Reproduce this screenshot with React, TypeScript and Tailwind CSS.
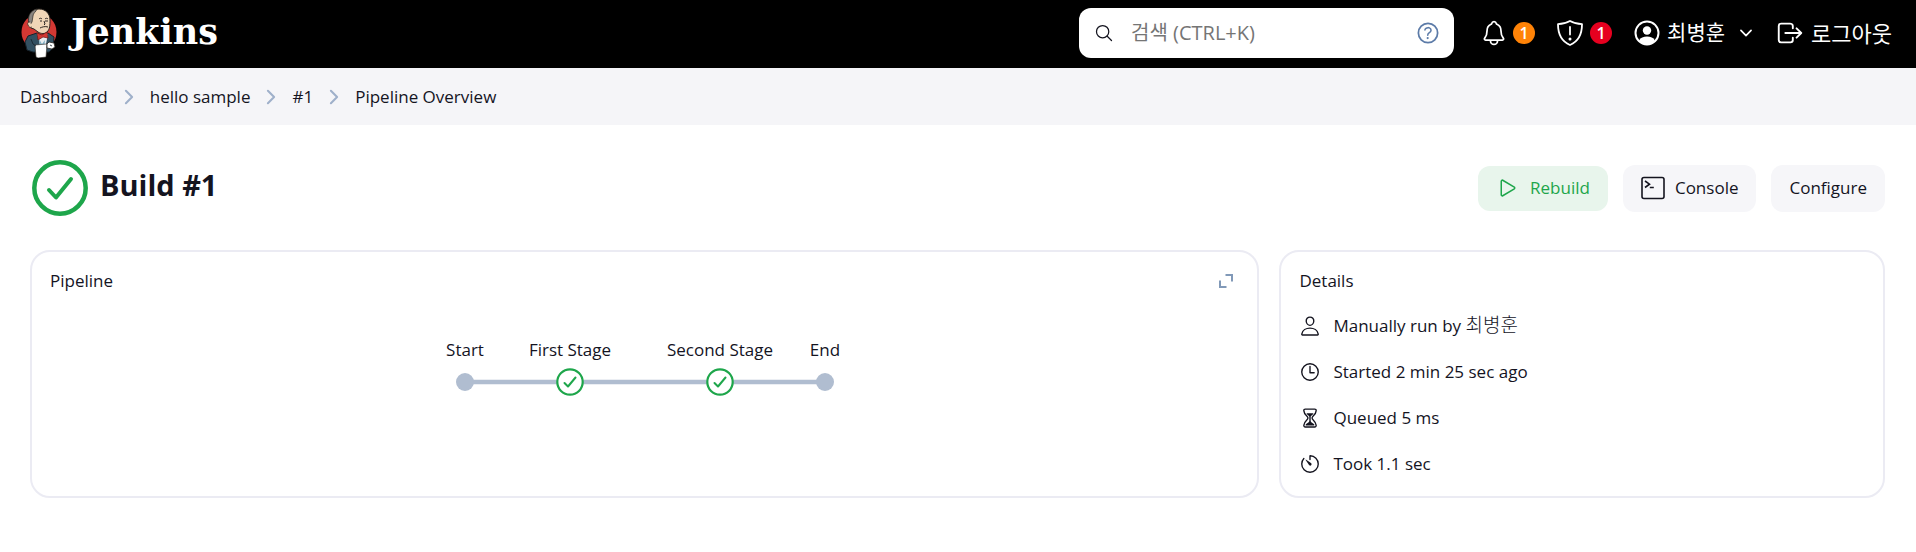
import type { ReactNode } from "react";
import {
  IoChevronDownOutline,
  IoChevronForwardOutline,
  IoHelpCircleOutline,
  IoHourglassOutline,
  IoLogOutOutline,
  IoNotificationsOutline,
  IoPersonOutline,
  IoPlayOutline,
  IoSearchOutline,
  IoTimeOutline,
  IoTimerOutline,
} from "react-icons/io5";

const crumbs = ["Dashboard", "hello sample", "#1", "Pipeline Overview"];

const nodes = [
  { x: 55, label: "Start", type: "edge" },
  { x: 160, label: "First Stage", type: "stage" },
  { x: 310, label: "Second Stage", type: "stage" },
  { x: 415, label: "End", type: "edge" },
];

function JenkinsLogo() {
  return (
    <svg viewBox="0 0 36 50" className="h-[50px] w-9 shrink-0" aria-hidden="true">
      <ellipse cx="18" cy="24" rx="17.5" ry="18" fill="#d33833" />
      <path d="M7 28l9-3 5 3 6-3 6 4-1 11-4 4H12l-6-2-2-8z" fill="#335061" stroke="#16222b" strokeWidth="1" />
      <path d="M16 25l5 4 3-4 3 1-3 15h-4z" fill="#e9edf0" />
      <path d="M18 31l3 5 3-4-1 9h-4z" fill="#81b0c4" />
      <path
        d="M8 14C7 6 12 1 18 1c7 0 11 5 11 11 0 5 0 9-3 12-2 2-6 2-9 0l-4-3-3-1c-2-1-2-3-2-6z"
        fill="#f0d6b7"
        stroke="#2b2622"
        strokeWidth="1"
      />
      <path d="M8 15C6 8 10 2 16 1c-1 3-4 4-4 7l-1 6-2 3z" fill="#8a8580" stroke="#2b2622" strokeWidth="0.7" />
      <path d="M9 14c-2 0-3 1-2 3s2 3 4 2" fill="#f0d6b7" stroke="#2b2622" strokeWidth="0.7" />
      <path
        d="M18 11c1-1 2-1 3 0M24 11c1-1 2-1 3 0M19 13h2M24 13h3M23 13l1 3-1 1M19 20c2-1 5-2 8-1"
        fill="none"
        stroke="#2b2622"
        strokeWidth="1"
      />
      <path d="M16 25l5 2 5-3 1 6-5-1-5 3z" fill="#d33833" stroke="#6b1512" strokeWidth="0.7" />
      <path d="M14 37l12-1-1 13-8 1-2-1z" fill="#fff" stroke="#2b2622" strokeWidth="0.6" />
      <path d="M26 36l2-2 5 1 1 4-3 2-5-1z" fill="#fff" stroke="#2b2622" strokeWidth="0.8" />
      <path d="M10 31l2 5 3 2M29 37l2 1" fill="none" stroke="#16222b" strokeWidth="0.8" />
    </svg>
  );
}

function ShieldIcon() {
  return (
    <svg viewBox="0 0 26 26" className="h-[26px] w-[26px]" fill="none" stroke="currentColor" strokeWidth="1.800">
      <path
        d="M13 1C9.600 3 5.500 4 1 4.200 1 14 3.800 21 13 25c9.200-4 12-11 12-20.800C20.500 4 16.400 3 13 1z"
        strokeLinejoin="round"
      />
      <path d="M13 7v7.500" strokeLinecap="round" />
      <circle cx="13" cy="19" r="1.500" fill="currentColor" stroke="none" />
    </svg>
  );
}

function UserCircleIcon() {
  return (
    <svg viewBox="0 0 26 26" className="h-[26px] w-[26px]">
      <circle cx="13" cy="13" r="11.500" fill="none" stroke="currentColor" strokeWidth="2" />
      <circle cx="13" cy="10.500" r="4.200" fill="currentColor" />
      <path d="M5 20.500c1.500-3 4.500-4 8-4s6.500 1 8 4A11 11 0 0 1 13 24.500a11 11 0 0 1-8-4z" fill="currentColor" />
    </svg>
  );
}

function ConsoleIcon() {
  return (
    <svg viewBox="0 0 24 24" className="h-6 w-6" fill="none" stroke="currentColor" strokeWidth="1.600">
      <rect x="1" y="1.500" width="22" height="21" rx="2" />
      <path d="M4 5l4.500 3.200L4 11.500M8.800 11.500h4" />
    </svg>
  );
}

function ExpandIcon() {
  return (
    <svg viewBox="0 0 14 14" className="h-[14px] w-[14px]" fill="none" stroke="currentColor" strokeWidth="2">
      <path d="M6.500 1H13v6.500M1 6.500V13h6.500" />
    </svg>
  );
}

function SuccessIcon() {
  return (
    <svg viewBox="0 0 56 56" className="h-14 w-14" fill="none" stroke="#1ea64b" strokeLinecap="round" strokeLinejoin="round">
      <circle cx="28" cy="28" r="25.700" strokeWidth="4.500" />
      <path d="M17 30l7 7.500L39 19" strokeWidth="4" />
    </svg>
  );
}

function Badge({ color, children }: { color: string; children: ReactNode }) {
  return (
    <span className={`flex h-[22px] w-[22px] items-center justify-center rounded-full text-base font-semibold ${color}`}>
      {children}
    </span>
  );
}

function Header() {
  return (
    <header className="flex h-[68px] items-center bg-black pr-6 pb-[2px] pl-[21px] text-white">
      <a href="#" className="flex items-center gap-[14px]">
        <JenkinsLogo />
        <span className="pb-[2px] font-['DejaVu_Serif',serif] text-[35px] leading-10 font-bold">Jenkins</span>
      </a>
      <label className="ml-auto flex h-[50px] w-[375px] items-center rounded-xl bg-white pr-3 pl-[15px]">
        <IoSearchOutline className="h-5 w-5 text-[#14141f]" />
        <input
          type="search"
          aria-label="검색"
          placeholder="검색 (CTRL+K)"
          className="ml-[17px] min-w-0 flex-1 bg-transparent text-xl text-[#14141f] outline-none placeholder:text-[#757575]"
        />
        <IoHelpCircleOutline className="h-7 w-7 text-[#5c7ba8]" />
      </label>
      <button type="button" aria-label="Notifications" className="ml-[26px] flex items-center gap-[5px]">
        <IoNotificationsOutline className="h-7 w-7" />
        <Badge color="bg-[#ff8307]">1</Badge>
      </button>
      <button type="button" aria-label="Security warnings" className="ml-[22px] flex items-center gap-[7px]">
        <ShieldIcon />
        <Badge color="bg-[#e6001f]">1</Badge>
      </button>
      <button type="button" className="ml-[22px] flex items-center gap-[7px] text-[21px]">
        <UserCircleIcon />
        최병훈
        <IoChevronDownOutline className="ml-[5px] h-[18px] w-[18px]" />
      </button>
      <a href="#" className="ml-5 flex items-center gap-[6px] text-[22px]">
        <IoLogOutOutline className="h-[30px] w-[30px]" />
        로그아웃
      </a>
    </header>
  );
}

function Breadcrumbs() {
  return (
    <nav className="flex h-[57px] items-center gap-[10px] bg-[#f5f5f8] px-5">
      {crumbs.map((crumb, index) => (
        <div key={crumb} className="flex items-center gap-[10px]">
          {index > 0 && <IoChevronForwardOutline className="h-[22px] w-[22px] text-[#9fb0ca]" />}
          <a href="#">{crumb}</a>
        </div>
      ))}
    </nav>
  );
}

function PipelineGraph() {
  return (
    <svg viewBox="0 0 470 70" className="mx-auto w-[470px]">
      <path d="M55 47H415" stroke="#b0bdd0" strokeWidth="4.500" />
      {nodes.map((node) => (
        <g key={node.label}>
          <text x={node.x} y="21" textAnchor="middle" fill="#14141f" fontSize="17">
            {node.label}
          </text>
          {node.type === "edge" ? (
            <circle cx={node.x} cy="47" r="9" fill="#b0bdd0" />
          ) : (
            <g fill="#fff" stroke="#1ea64b">
              <circle cx={node.x} cy="47" r="12.700" strokeWidth="2.200" />
              <path
                d={`M${node.x - 5.5} 48l3.500 3.500 7.500-9`}
                fill="none"
                strokeWidth="2"
                strokeLinecap="round"
                strokeLinejoin="round"
              />
            </g>
          )}
        </g>
      ))}
    </svg>
  );
}

function DetailItem({ icon, children }: { icon: ReactNode; children: ReactNode }) {
  return (
    <li className="flex h-[46px] items-center gap-3">
      {icon}
      <span>{children}</span>
    </li>
  );
}

export default function App() {
  return (
    <div className="min-h-screen bg-white font-['Open_Sans','Noto_Sans_CJK_KR',sans-serif] text-[17px] text-[#14141f]">
      <Header />
      <Breadcrumbs />
      <main className="pt-[35px] pr-[31px] pl-[30px]">
        <div className="flex items-center justify-between">
          <div className="flex items-center gap-3 pl-[2px]">
            <SuccessIcon />
            <h1 className="pb-[6px] text-[29px] leading-10 font-bold">Build #1</h1>
          </div>
          <div className="flex items-center gap-[15px]">
            <button type="button" className="flex h-[45px] items-center gap-[10px] rounded-xl bg-[#e8f5ec] px-[18px] text-[#1ea64b]">
              <IoPlayOutline className="h-6 w-6" />
              Rebuild
            </button>
            <button type="button" className="flex h-[47px] items-center gap-[10px] rounded-xl bg-[#f6f6f9] px-[18px]">
              <ConsoleIcon />
              Console
            </button>
            <button type="button" className="h-[47px] rounded-xl bg-[#f6f6f9] px-[18px]">
              Configure
            </button>
          </div>
        </div>
        <div className="mt-[34px] grid grid-cols-[67fr_33fr] gap-5">
          <section className="rounded-[20px] border-2 border-[#ebebf3] px-[18px] py-[17px]">
            <div className="flex items-center justify-between">
              <h2 className="leading-6">Pipeline</h2>
              <button type="button" aria-label="Expand" className="pr-[6px] text-[#8199b8]">
                <ExpandIcon />
              </button>
            </div>
            <div className="pt-[42px]">
              <PipelineGraph />
            </div>
          </section>
          <section className="rounded-[20px] border-2 border-[#ebebf3] px-[18px] pt-[17px] pb-[9px]">
            <h2 className="mb-[10px] leading-6">Details</h2>
            <ul>
              <DetailItem icon={<IoPersonOutline className="h-[22px] w-[22px]" />}>
                Manually run by <span className="text-[19px] leading-6 font-light">최병훈</span>
              </DetailItem>
              <DetailItem icon={<IoTimeOutline className="h-[22px] w-[22px]" />}>Started 2 min 25 sec ago</DetailItem>
              <DetailItem icon={<IoHourglassOutline className="h-[22px] w-[22px]" />}>Queued 5 ms</DetailItem>
              <DetailItem icon={<IoTimerOutline className="h-[22px] w-[22px]" />}>Took 1.1 sec</DetailItem>
            </ul>
          </section>
        </div>
      </main>
    </div>
  );
}
